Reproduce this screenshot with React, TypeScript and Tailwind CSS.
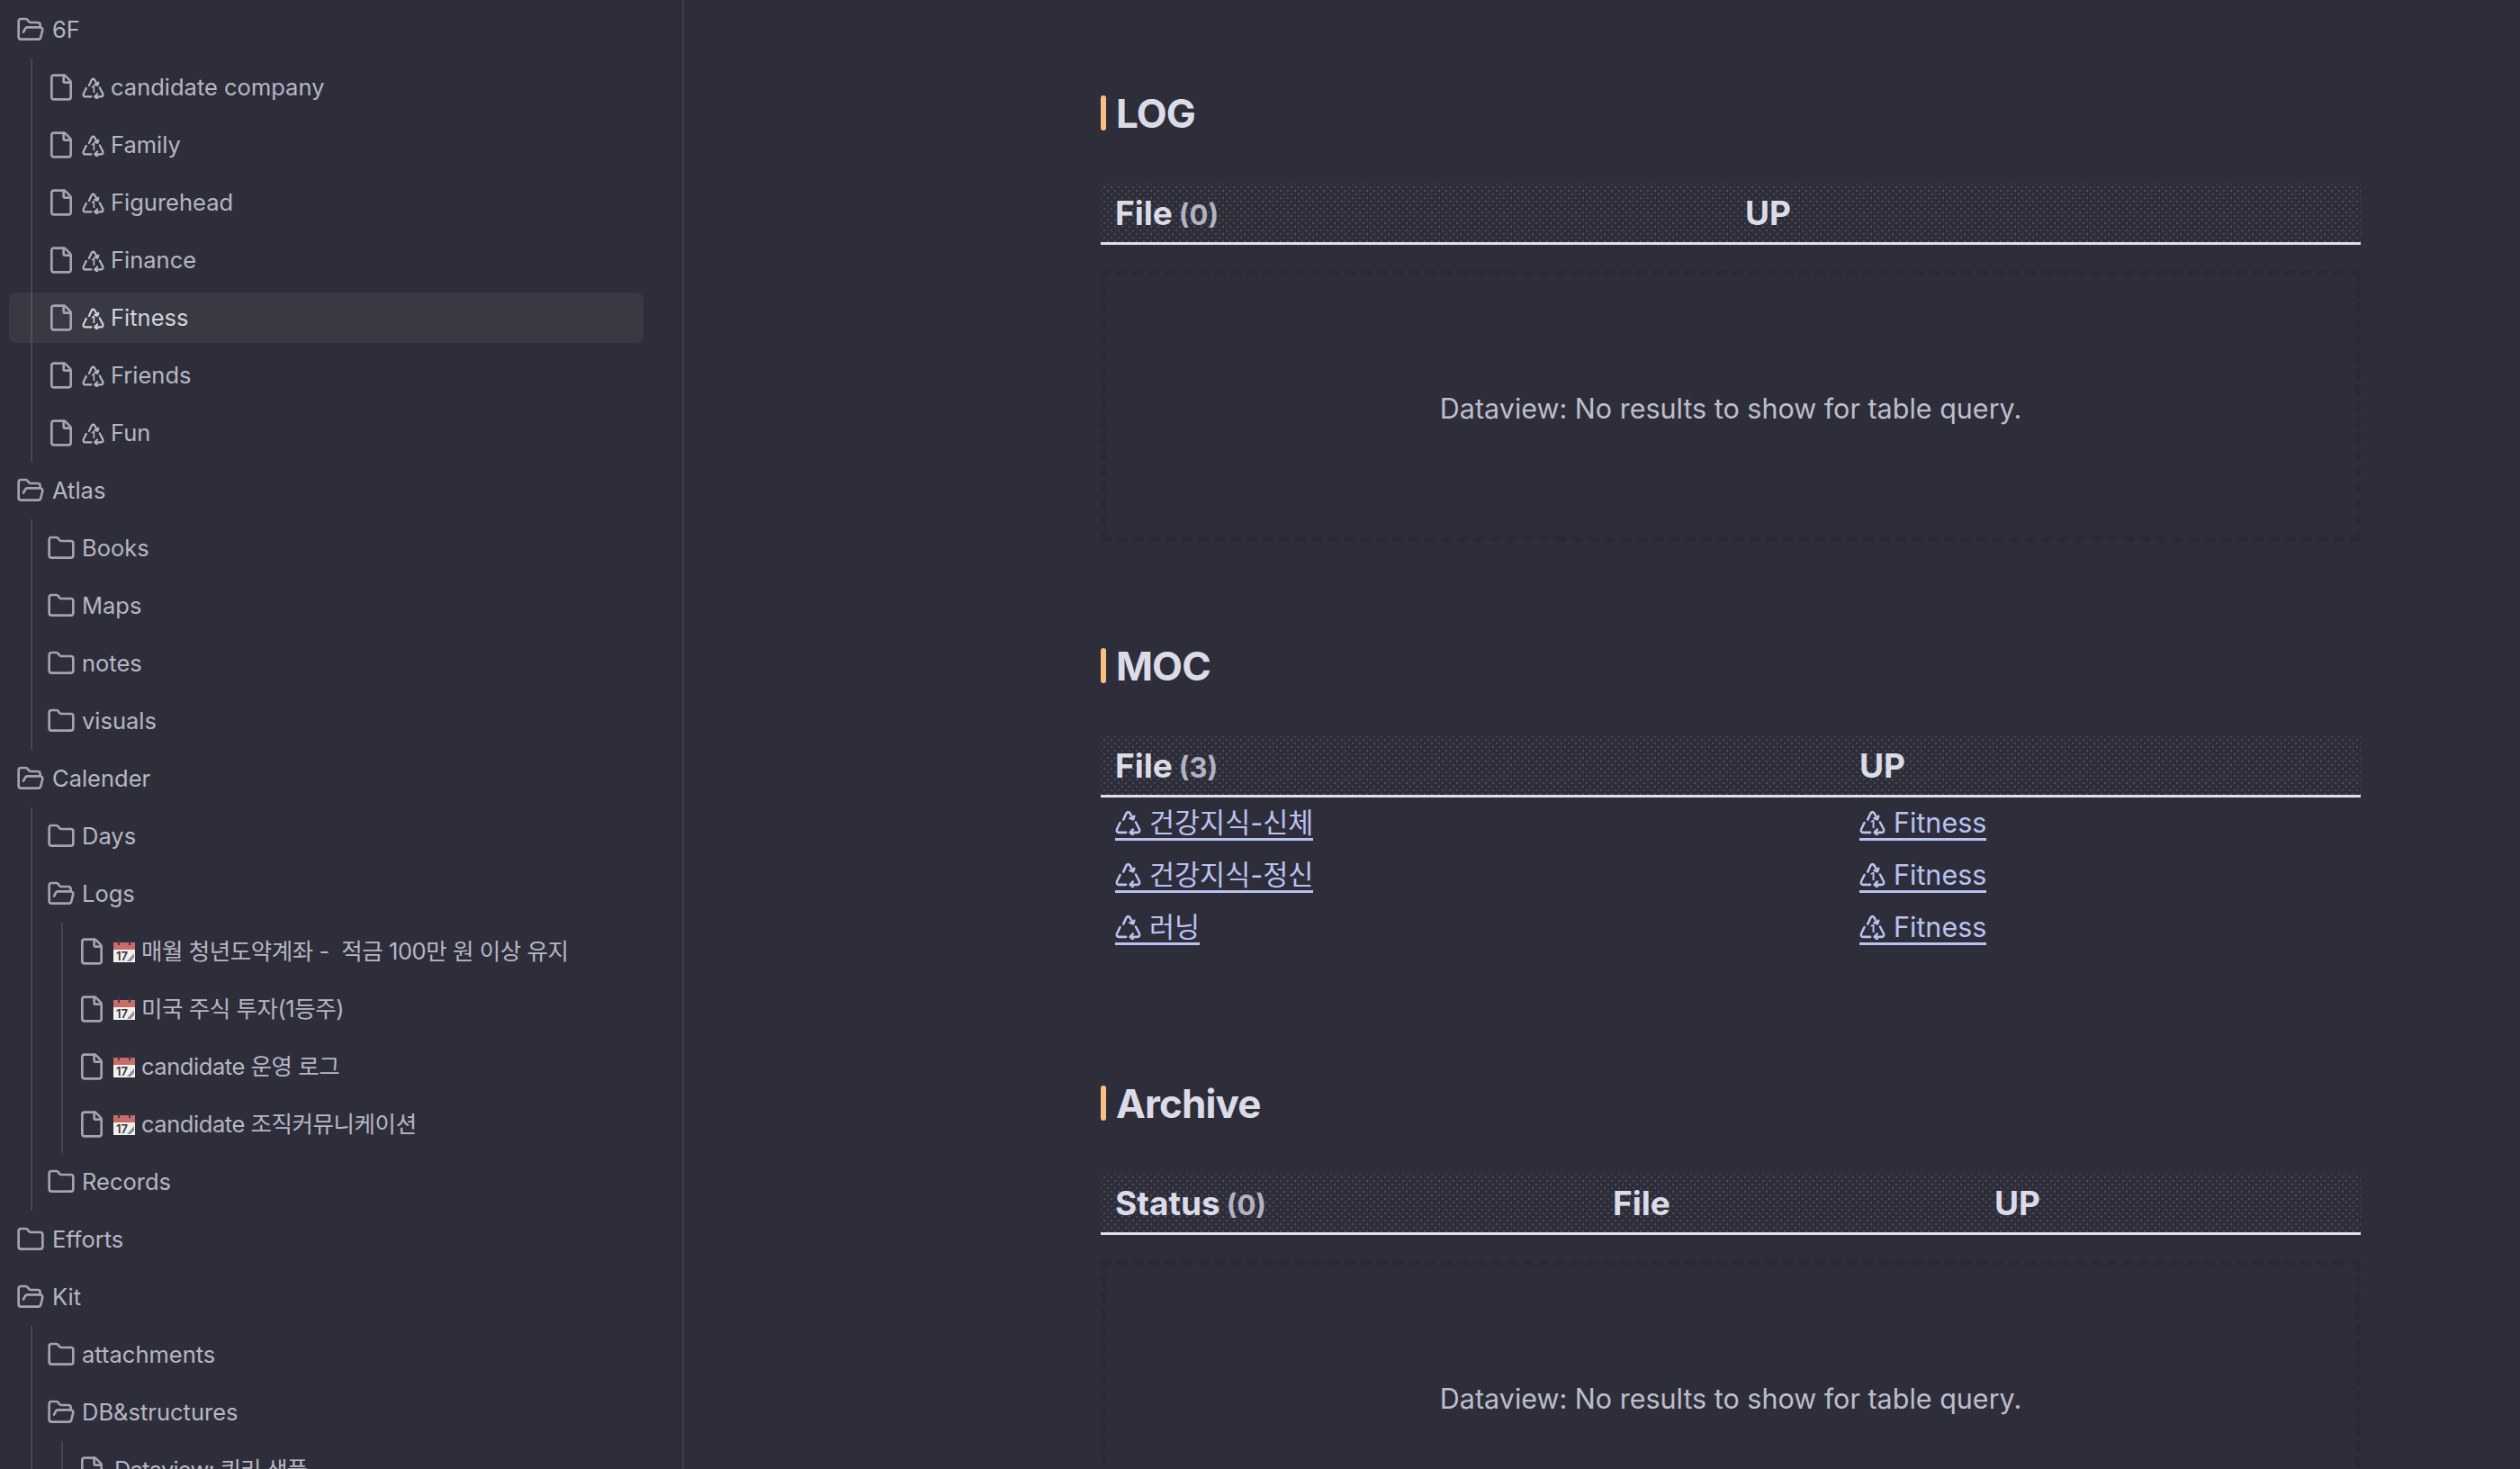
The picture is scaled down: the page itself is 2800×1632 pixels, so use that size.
import React from "react";
import { File, Folder, FolderOpen } from "lucide-react";

const FONT = "font-['Inter','Noto_Sans_CJK_KR',sans-serif]";

function Calendar() {
  return (
    <svg width="24" height="25" viewBox="0 0 24 25" className="shrink-0 -mt-[2px] ml-px">
      <rect x="0" y="3" width="24" height="22" fill="#f2f0ee" />
      <rect x="0" y="3" width="24" height="8" fill="#c96b68" />
      <rect x="5" y="0" width="2" height="6" fill="#3a3a3a" />
      <rect x="17" y="0" width="2" height="6" fill="#3a3a3a" />
      <text x="3" y="23" fontSize="13" fontWeight="600" fill="#333" fontFamily="Inter">17</text>
      <path d="M15 24 L23 15 L23 20 L19 24 Z" fill="#8d8d8d" />
    </svg>
  );
}

function Recycle({ one = true, size = 25 }: { one?: boolean; size?: number }) {
  return (
    <svg width={size} height={size} viewBox="0 0 24 24" fill="none" stroke="currentColor" strokeWidth="2.1" strokeLinecap="round" strokeLinejoin="round" className="shrink-0">
      <path d="M7.6 9.6 L10.4 3.6 Q12 1.6 13.6 3.6 L16.4 8.6" />
      <path d="M13.6 8.4 L16.6 9.4 L17.6 6.4" />
      <path d="M19 12 L22.4 18.6 Q23 21.4 20.4 21.4 L14.4 21.4" />
      <path d="M16.4 18.6 L13.8 21.4 L16.4 23.6" />
      <path d="M10 21.4 L3.6 21.4 Q1 21.4 1.6 18.6 L4.6 12.4" />
      {one && <text x="12" y="17.6" textAnchor="middle" fontSize="10" fontWeight="700" fill="currentColor" stroke="none" fontFamily="Inter">1</text>}
    </svg>
  );
}

function Row({ icon, label, glyph, cal, active, tight, pad = "pl-[16px]", gap = "gap-[7px]" }: { icon: "open" | "folder" | "file"; label: string; glyph?: boolean; cal?: boolean; active?: boolean; tight?: string; pad?: string; gap?: string }) {
  const Icon = icon === "open" ? FolderOpen : icon === "folder" ? Folder : File;
  return (
    <div className="h-[64px] flex items-center">
      <div className={active ? "h-[56px] w-[705px] -ml-[26px] pl-[42px] flex items-center gap-[7px] rounded-[8px] bg-white/[0.055] text-[#d2d2de]" : `h-[56px] flex-1 flex items-center whitespace-pre ${pad} ${gap}`}>
        <Icon size={32} strokeWidth={2} className="shrink-0 text-[#a3a3b1]" />
        {glyph && <span className="flex w-[25px] shrink-0"><Recycle /></span>}
        {cal && <span className="flex w-[25px] shrink-0"><Calendar /></span>}
        <span className={tight}>{label}</span>
      </div>
    </div>
  );
}

function Group({ children, level2 }: { children: React.ReactNode; level2?: boolean }) {
  return <div className={level2 ? "ml-[32px] border-l-2 border-[#454552]" : "ml-[34px] border-l-2 border-[#454552]"}>{children}</div>;
}

function Sidebar() {
  const top = "pl-[18px]";
  return (
    <aside className="w-[760px] shrink-0 h-full overflow-hidden border-r-2 border-[#3f3f4b] pt-[1px] text-[25.5px] leading-[34px] text-[#b6b6c4]">
      <Row icon="open" label="6F" pad={top} gap="gap-[8px]" />
      <Group>
        {["candidate company", "Family", "Figurehead", "Finance"].map((l) => <Row key={l} icon="file" label={l} glyph />)}
        <Row icon="file" label="Fitness" glyph active />
        {["Friends", "Fun"].map((l) => <Row key={l} icon="file" label={l} glyph />)}
      </Group>
      <Row icon="open" label="Atlas" pad={top} gap="gap-[8px]" />
      <Group>
        {["Books", "Maps", "notes", "visuals"].map((l) => <Row key={l} icon="folder" label={l} />)}
      </Group>
      <Row icon="open" label="Calender" pad={top} gap="gap-[8px]" />
      <Group>
        <Row icon="folder" label="Days" />
        <Row icon="open" label="Logs" />
        <Group level2>
          {["매월 청년도약계좌 -  적금 100만 원 이상 유지", "미국 주식 투자(1등주)", "candidate 운영 로그", "candidate 조직커뮤니케이션"].map((l) => <Row key={l} icon="file" label={l} cal tight="tracking-[-0.45px]" />)}
        </Group>
        <Row icon="folder" label="Records" />
      </Group>
      <Row icon="folder" label="Efforts" pad={top} gap="gap-[8px]" />
      <Row icon="open" label="Kit" pad={top} gap="gap-[8px]" />
      <Group>
        <Row icon="folder" label="attachments" />
        <Row icon="open" label="DB&structures" />
        <Group level2>
          <Row icon="file" label="Dataview: 쿼리 샘플" gap="gap-[9px]" tight="tracking-[-0.8px]" />
        </Group>
      </Group>
    </aside>
  );
}

function Heading({ children, className = "" }: { children: string; className?: string }) {
  return (
    <h2 className={`h-[56px] flex items-center gap-[11px] text-[44px] font-bold tracking-[-0.02em] text-[#dcdce8] ${className}`}>
      <span className="w-[6px] h-[39px] rounded-full bg-[#fcbf83]" />
      <span className="pt-[1px]">{children}</span>
    </h2>
  );
}

function HeaderRow({ cols, count, first, grid }: { cols: string[]; count: number; first: string; grid: string }) {
  return (
    <div className={`mt-[51px] h-[68px] grid items-center pl-[16px] border-b-[3px] border-[#e0e0ea] text-[37px] font-bold text-[#dcdce8] bg-[radial-gradient(circle,#4c4c58_1px,transparent_1.2px),radial-gradient(circle,#4c4c58_1px,transparent_1.2px)] bg-size-[8px_8px] bg-position-[0_0,4px_4px] ${grid}`}>
      <div className="flex items-baseline gap-[7px]">{first}<span className="text-[31px] text-[#b3b3c0]">({count})</span></div>
      {cols.map((c) => <div key={c}>{c}</div>)}
    </div>
  );
}

function Empty() {
  return (
    <div className="mt-[28px] h-[302px] pt-[6px] flex items-center justify-center border-[6px] border-dashed border-[#2a2a33] text-[30.5px] text-[#bebecb]">
      Dataview: No results to show for table query.
    </div>
  );
}

function LinkText({ one, children }: { one: boolean; children: string }) {
  return (
    <a className="inline-flex items-center gap-[9px] border-b-[3px] border-[#bac2f0] h-[37px] leading-[34px] text-[30.5px] text-[#bac2f0]">
      <Recycle one={one} size={29} />
      {children}
    </a>
  );
}

function MocRow({ name }: { name: string }) {
  return (
    <div className="h-[58px] grid grid-cols-[827px_1fr] items-center pl-[16px]">
      <div className="flex"><LinkText one={false}>{name}</LinkText></div>
      <div className="flex"><LinkText one>Fitness</LinkText></div>
    </div>
  );
}

export default function App() {
  return (
    <div className={`h-[1632px] w-[2800px] overflow-hidden flex bg-[#2e2e3a] ${FONT}`}>
      <Sidebar />
      <main className="ml-[463px] w-[1400px] shrink-0 pt-[97px]">
        <Heading>LOG</Heading>
        <HeaderRow first="File" count={0} cols={["UP"]} grid="grid-cols-[700px_1fr]" />
        <Empty />
        <Heading className="mt-[109px]">MOC</Heading>
        <HeaderRow first="File" count={3} cols={["UP"]} grid="grid-cols-[827px_1fr]" />
        <MocRow name="건강지식-신체" />
        <MocRow name="건강지식-정신" />
        <MocRow name="러닝" />
        <Heading className="mt-[137px]">Archive</Heading>
        <HeaderRow first="Status" count={0} cols={["File", "UP"]} grid="grid-cols-[553px_424px_1fr]" />
        <Empty />
      </main>
    </div>
  );
}
